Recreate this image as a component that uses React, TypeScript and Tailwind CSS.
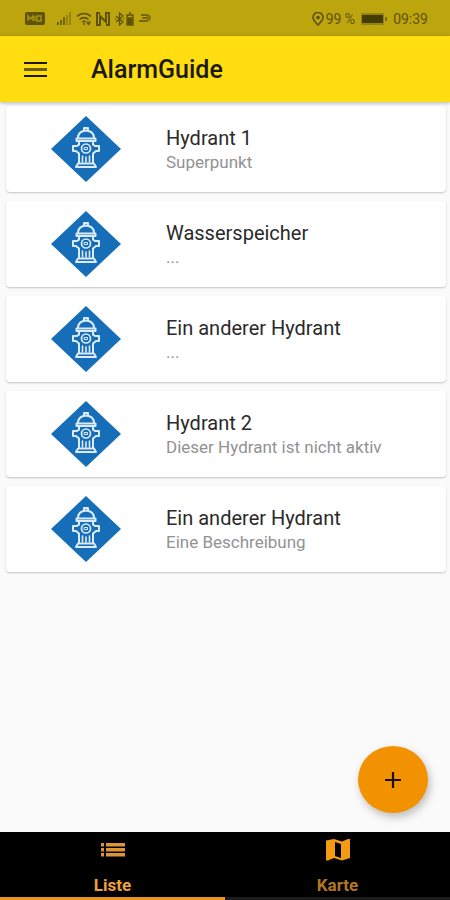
import React from 'react'

const hydrants = [
  { title: 'Hydrant 1', description: 'Superpunkt' },
  { title: 'Wasserspeicher', description: '...' },
  { title: 'Ein anderer Hydrant', description: '...' },
  { title: 'Hydrant 2', description: 'Dieser Hydrant ist nicht aktiv' },
  { title: 'Ein anderer Hydrant', description: 'Eine Beschreibung' },
]

const HydrantIcon = () => (
  <svg viewBox="0 0 70 66" className="h-[66px] w-[70px] shrink-0" aria-hidden="true">
    <path d="M35 0 70 33 35 66 0 33Z" fill="#166db8" />
    <g fill="none" stroke="#dcebf8" strokeWidth="2" strokeLinecap="round" strokeLinejoin="round">
      <path d="M33 14.500v-2.500h4v2.500M27 22c0-4 3-7 8-7.500 5 .5 8 3.500 8 7.500" />
      <path d="M25.500 22.500h19v2.500h-19zM28 25v3.500M42 25v3.500" />
      <path d="M28 28.500 26 30h-4v5h3l3 2.500V47M42 28.500l2 1.500h4v5h-3l-3 2.500V47" />
      <circle cx="35" cy="32.500" r="4.500" strokeWidth="1.700" />
      <path d="M33.500 31.500h3v2h-3z" strokeWidth="1" />
      <path d="M31.500 40v6M35 41v5M38.500 40v6" strokeWidth="1.600" />
      <path d="M27 47.500h16l2 3.500H25z" />
    </g>
  </svg>
)

const StatusBar = () => (
  <div className="flex h-9 items-center justify-between bg-[#bda50d] pr-[22px] pl-[25px] pt-px text-[#5f5209]">
    <div className="flex items-center gap-1">
      <svg viewBox="0 0 20 13" className="mr-2 h-[13px] w-5" aria-hidden="true">
        <rect width="20" height="13" rx="2" fill="currentColor" />
        <path d="M3 9V4l2.500 3L8 4v5M10 4v5M12 4h4v5h-4z" fill="none" stroke="#a8930f" strokeWidth="1.500" />
      </svg>
      <svg viewBox="0 0 15 13" className="h-[13px] w-[15px]" fill="currentColor" aria-hidden="true">
        <path d="M0 10h2v3H0zM3 8h2v5H3zM6 5h2v8H6z" opacity=".8" />
        <path d="M9 3h2v10H9zM12 0h2v13h-2z" opacity=".4" />
      </svg>
      <svg viewBox="0 0 16 14" className="h-3.5 w-4" fill="none" stroke="currentColor" strokeWidth="1.500" aria-hidden="true">
        <path d="M1 4.500c4-4 10-4 14 0M3.500 7.500c3-2.500 6-2.500 9 0M6 10c1-1 3-1 4 0" />
        <path d="M8 11v2M11 10l2 3M13.500 9v3" />
      </svg>
      <svg viewBox="0 0 14 14" className="h-3.5 w-3.5" fill="none" stroke="currentColor" strokeWidth="2" aria-hidden="true">
        <path d="M4 1H1v12h3V4l6 6M10 13h3V1h-3v9L4 4" />
      </svg>
      <svg viewBox="0 0 20 14" className="h-3.5 w-5" fill="none" stroke="currentColor" strokeWidth="1.300" aria-hidden="true">
        <path d="m2 4 7 6-3.500 3V1L9 4l-7 6M1 7h1M9 7h1" />
        <path d="M13 3h6v10h-6zM15 1h2" />
        <path d="M14 6h4v6h-4z" fill="currentColor" />
      </svg>
      <svg viewBox="0 0 14 12" className="h-3 w-3.5" fill="none" stroke="currentColor" strokeWidth="1.800" opacity=".75" aria-hidden="true">
        <path d="M3 2h5c5 1 5 4 1 6H1M4 5h6" />
      </svg>
    </div>
    <div className="flex items-center font-['Roboto',sans-serif] text-sm">
      <svg viewBox="0 0 12 14" className="mr-[2px] h-3.5 w-3" fill="none" stroke="currentColor" strokeWidth="1.700" aria-hidden="true">
        <path d="M6 13C3 10 1 8 1 5.500a5 5 0 0 1 10 0C11 8 9 10 6 13Z" />
        <circle cx="6" cy="5.500" r="1" fill="currentColor" />
      </svg>
      <span>99 %</span>
      <svg viewBox="0 0 28 12" className="mr-1 ml-1.5 h-3 w-7" fill="currentColor" aria-hidden="true">
        <rect width="23" height="12" rx="1" opacity=".4" />
        <path d="M1 2h21v8H1z" fill="#453b05" />
        <path d="M24 4h2v4h-2z" opacity=".7" />
      </svg>
      <span>09:39</span>
    </div>
  </div>
)

const App = () => {
  return (
    <div className="relative flex min-h-screen flex-col bg-[#fafafa] font-['Roboto',sans-serif]">
      <StatusBar />

      <header className="z-10 flex h-[66px] items-center bg-[#ffdd10] px-6 pt-px shadow-[0_1px_4px_rgba(0,0,0,0.3)]">
        <button type="button" aria-label="Menü" className="mr-11">
          <svg viewBox="0 0 23 15" className="h-[15px] w-[23px]" aria-hidden="true">
            <path d="M0 0h23v2H0zM0 13h23v2H0z" fill="#1c1903" />
            <path d="M0 6h23v3H0z" fill="#6b5d09" />
          </svg>
        </button>
        <h1 className="text-[25px] leading-8 font-medium text-[#1c1903]">AlarmGuide</h1>
      </header>

      <main className="flex-1">
        <ul className="flex flex-col gap-[9px] pt-1 pr-1 pl-1.5">
          {hydrants.map((hydrant, index) => (
            <li
              key={index}
              className="flex h-[86px] items-center rounded bg-white pl-[45px] shadow-[0_1px_2px_rgba(0,0,0,0.22)]"
            >
              <HydrantIcon />
              <div className="ml-[45px] min-w-0 pt-0.5">
                <h2 className="text-xl leading-6 text-[#2a2a2a]">{hydrant.title}</h2>
                <p className="text-[17px] leading-6 text-[#929292]">{hydrant.description}</p>
              </div>
            </li>
          ))}
        </ul>
      </main>

      <button
        type="button"
        aria-label="Hinzufügen"
        className="absolute right-[22px] bottom-[87px] flex h-[67px] w-[70px] items-center justify-center rounded-[50%] bg-[#f39200] shadow-[2px_4px_8px_rgba(0,0,0,0.25)]"
      >
        <svg viewBox="0 0 18 18" className="size-[18px]" fill="none" stroke="#1a1000" strokeWidth="2.200" aria-hidden="true">
          <path d="M9 1v16M1 9h16" />
        </svg>
      </button>

      <nav className="grid h-[68px] grid-cols-2 bg-black text-[17px] font-bold">
        <button type="button" className="flex flex-col items-center border-b-[3px] border-[#e8951f] pt-1.5 text-[#eda03a]">
          <svg viewBox="0 0 24 24" className="h-6 w-6" fill="#dd9538" aria-hidden="true">
            <path d="M0 5h3v3.500H0zM0 10h3v3.500H0zM0 15h3v3.500H0zM5 5h19v3.500H5zM5 10h19v3.500H5zM5 15h19v3.500H5z" />
          </svg>
          <span className="mt-[11px] leading-6">Liste</span>
        </button>
        <button type="button" className="flex flex-col items-center border-b-[3px] border-[#1c1c1c] pt-1.5 text-[#b07623]">
          <svg viewBox="0 0 24 24" className="h-6 w-6" aria-hidden="true">
            <path
              fillRule="evenodd"
              fill="#f59a13"
              d="M0 2.500 8 1l8 2.500L22 1h2v19l-8 2.500L8 20l-6 2.500H0zM9 4v14l6 2V6z"
            />
          </svg>
          <span className="mt-[11px] leading-6">Karte</span>
        </button>
      </nav>
    </div>
  )
}

export default App
